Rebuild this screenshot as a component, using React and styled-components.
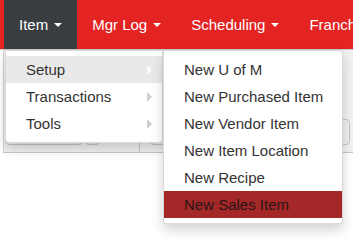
import React from "react";
import styled, { createGlobalStyle } from "styled-components";

const Global = createGlobalStyle`
  html, body { margin: 0; padding: 0; background: #fff; }
  body { font-family: "Liberation Sans", Arial, sans-serif; overflow: hidden; }
  * { box-sizing: border-box; }
`;

const Page = styled.div`
  position: relative;
  width: 353px;
  height: 243px;
  overflow: hidden;
  background: #fff;
`;

const Navbar = styled.nav`
  height: 50px;
  background: #e42323;
  border-bottom: 1px solid #c9c9c9;
  display: flex;
  padding-left: 4px;
  white-space: nowrap;
`;

const NavItem = styled.div`
  height: 49px;
  padding: 0 15px;
  display: flex;
  align-items: center;
  font-size: 15px;
  color: #fff;
  background: ${(p) => (p.$active ? "#3a3d40" : "transparent")};
  flex-shrink: 0;
`;

const Caret = styled.span`
  display: inline-block;
  width: 0;
  height: 0;
  margin-left: 6px;
  margin-top: 1px;
  border-top: 4px solid #fff;
  border-left: 4px solid transparent;
  border-right: 4px solid transparent;
`;

const Toolbar = styled.div`
  height: 103px;
  background: #f1f1f1;
  border-bottom: 1px solid #c8c8c8;
  border-left: 1px solid #d4d4d4;
  margin-left: 3px;
  display: flex;
  align-items: flex-end;
  padding: 0 0 7px 1px;
  gap: 2px;
`;

const Field = styled.div`
  width: ${(p) => p.$w}px;
  height: 26px;
  border: 1px solid #c4c4c4;
  border-radius: 4px;
  background: #efefef;
  margin-left: ${(p) => p.$ml || 0}px;
  display: flex;
  align-items: flex-end;
  justify-content: flex-end;
  padding: 0 2px 1px 0;
  font-size: 10px;
  color: #666;
`;

const Divider = styled.div`
  width: 1px;
  align-self: stretch;
  margin: 0 8px 0 37px;
  background: #c8c8c8;
  margin-bottom: -7px;
`;

const Menu = styled.ul`
  position: absolute;
  top: 50px;
  left: ${(p) => p.$left}px;
  width: ${(p) => p.$width}px;
  margin: 0;
  padding: 5px 0;
  list-style: none;
  background: #fff;
  border: 1px solid rgba(0, 0, 0, 0.15);
  border-radius: ${(p) => p.$radius};
  box-shadow: 0 6px 12px rgba(0, 0, 0, 0.175);
  z-index: ${(p) => p.$z};
`;

const MenuItem = styled.li`
  position: relative;
  padding: 3px 20px;
  font-size: 15px;
  line-height: 21px;
  color: ${(p) => (p.$active ? "#2a1515" : "#333")};
  background: ${(p) =>
    p.$active ? "#a52828" : p.$hover ? "#e9e9e9" : "transparent"};
  white-space: nowrap;
`;

const SubArrow = styled.span`
  position: absolute;
  right: 10px;
  top: 9px;
  width: 0;
  height: 0;
  border-left: 5px solid ${(p) => (p.$light ? "#fbfbfb" : "#cfcfcf")};
  border-top: 5px solid transparent;
  border-bottom: 5px solid transparent;
`;

const navItems = [
  { label: "Item", active: true },
  { label: "Mgr Log" },
  { label: "Scheduling" },
  { label: "Franchise", noCaret: true },
];

const leftItems = ["Setup", "Transactions", "Tools"];
const rightItems = [
  "New U of M",
  "New Purchased Item",
  "New Vendor Item",
  "New Item Location",
  "New Recipe",
  "New Sales Item",
];

export default function App() {
  return (
    <Page>
      <Global />
      <Navbar>
        {navItems.map((n) => (
          <NavItem key={n.label} $active={n.active}>
            {n.label}
            {!n.noCaret && <Caret />}
          </NavItem>
        ))}
      </Navbar>
      <Toolbar>
        <Field $w={78} />
        <Field $w={15}>◡</Field>
        <Divider />
        <Field $w={200} />
      </Toolbar>
      <Menu $left={5} $width={158} $radius="0 0 4px 4px" $z={2}>
        {leftItems.map((t, i) => (
          <MenuItem key={t} $hover={i === 0}>
            {t}
            <SubArrow $light={i === 0} />
          </MenuItem>
        ))}
      </Menu>
      <Menu $left={163} $width={180} $radius="0 4px 4px 4px" $z={3}>
        {rightItems.map((t, i) => (
          <MenuItem key={t} $active={i === rightItems.length - 1}>
            {t}
          </MenuItem>
        ))}
      </Menu>
    </Page>
  );
}
